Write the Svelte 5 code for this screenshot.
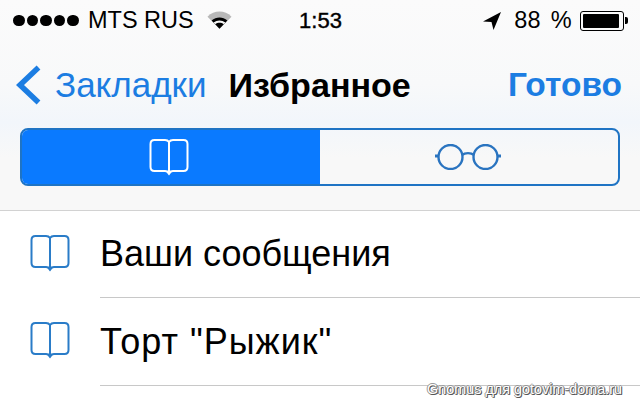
<script>
  const rows = [
    { text: 'Ваши сообщения', wide: false },
    { text: 'Торт "Рыжик"', wide: true }
  ];
</script>

{#snippet book(stroke, width)}
  <svg class="book" viewBox="0 0 40 38" fill="none" stroke={stroke} stroke-width={width}>
    <path d="M20 4 C19 2.500 18 2 16 2 H5.500 C3 2 1.500 3.500 1.500 6 V29 C1.500 31.500 3 33 5.500 33 H16 C18 33 19 33.500 20 35 C21 33.500 22 33 24 33 H34.500 C37 33 38.500 31.500 38.500 29 V6 C38.500 3.500 37 2 34.500 2 H24 C22 2 21 2.500 20 4 Z" />
    <path d="M20 3 V36" />
    <path d="M17 33.500 H23 L20 37.500 Z" fill={stroke} stroke="none" />
  </svg>
{/snippet}

<div class="screen">
  <header class="top">
    <div class="status">
      <div class="status-left">
        <span class="dots">
          {#each Array(5) as _}<i></i>{/each}
        </span>
        <span class="carrier">MTS RUS</span>
        <svg class="wifi" viewBox="0 0 26 18">
          <path d="M13 18 L0.500 5.500 C7.500 -1.500 18.500 -1.500 25.500 5.500 Z" fill="#b8b8b8" />
          <path d="M13 18 L4.800 9.600 C9.500 5.200 16.500 5.200 21.200 9.600 Z" fill="#000" />
          <path d="M6.900 11.700 C10.500 8.700 15.500 8.700 19.100 11.700 L17.500 13.300 C14.800 11.300 11.200 11.300 8.500 13.300 Z" fill="#f8f8f8" />
        </svg>
      </div>
      <span class="time">1:53</span>
      <div class="status-right">
        <svg class="arrow" viewBox="0 0 18 18">
          <path d="M18 0 L0 9.500 L8.500 10 L10.500 18 Z" fill="#000" />
        </svg>
        <span class="pct">88 %</span>
        <span class="battery"><b></b></span>
        <span class="nub"></span>
      </div>
    </div>

    <nav class="nav">
      <div class="back">
        <svg class="chevron" viewBox="0 0 26 40" fill="none" stroke="#1c7de2" stroke-width="5.500">
          <path d="M22.500 2.500 L4 20 L22.500 37.500" />
        </svg>
        <span>Закладки</span>
      </div>
      <span class="title">Избранное</span>
      <span class="done">Готово</span>
    </nav>

    <div class="segments">
      <div class="seg on">
        {@render book('#fff', 2)}
      </div>
      <div class="seg">
        <svg class="glasses" viewBox="0 0 66 26" fill="none" stroke="#2a74c0" stroke-width="2.400">
          <circle cx="15.500" cy="13" r="12" />
          <circle cx="50.500" cy="13" r="12" />
          <path d="M27 11 C30 8.500 36 8.500 39 11" />
          <path d="M0 12 H4 M62 12 H66" stroke-width="3" />
        </svg>
      </div>
    </div>
  </header>

  <ul class="list">
    {#each rows as row}
      <li>
        <span class="icon">{@render book('#2a7cc8', 2)}</span>
        <span class="label" class:wide={row.wide}>{row.text}</span>
      </li>
    {/each}
  </ul>

  <span class="credit">Gnomus для gotovim-doma.ru</span>
</div>

<style>
  :global(body) {
    margin: 0;
    background: #fff;
  }

  .screen {
    position: relative;
    width: 640px;
    height: 409px;
    overflow: hidden;
    background: #fff;
    font-family: "Liberation Sans", Arial, sans-serif;
    color: #000;
  }

  .top {
    height: 211px;
    box-sizing: border-box;
    background: linear-gradient(180deg, #fbfbfb 0%, #f8f9fa 40%, #f2f6fb 58%, #f8f8f8 75%);
    border-bottom: 1px solid #d2d2d2;
    padding-top: 7px;
  }

  .status {
    display: grid;
    grid-template-columns: 1fr auto 1fr;
    align-items: center;
    height: 26px;
    padding: 0 12px 0 13px;
    font-size: 23.500px;
  }

  .status-left,
  .status-right {
    display: flex;
    align-items: center;
  }

  .status-right {
    justify-content: flex-end;
  }

  .dots {
    display: flex;
    gap: 2px;
    margin-right: 9px;
  }

  .dots i {
    width: 11.600px;
    height: 11.600px;
    border-radius: 50%;
    background: #000;
  }

  .wifi {
    width: 25px;
    height: 18px;
    margin-left: 13px;
    margin-top: -2px;
  }

  .time {
    font-size: 22px;
    -webkit-text-stroke: 0.4px #000;
  }

  .arrow {
    width: 18px;
    height: 18px;
    margin-right: 13px;
  }

  .pct {
    margin-right: 8px;
    word-spacing: 3px;
    letter-spacing: 0.3px;
  }

  .battery {
    box-sizing: border-box;
    width: 44px;
    height: 20px;
    padding: 2px;
    border: 1px solid #000;
    border-radius: 3px;
    display: flex;
  }

  .battery b {
    width: 36px;
    background: #000;
    border-radius: 1px;
  }

  .nub {
    width: 3px;
    height: 7px;
    background: #000;
    border-radius: 0 2px 2px 0;
    margin-left: 1px;
  }

  .nav {
    display: flex;
    align-items: center;
    height: 40px;
    margin-top: 32px;
    padding-left: 16px;
    padding-right: 18px;
    font-size: 35px;
  }

  .back {
    display: flex;
    align-items: center;
    color: #1c7de2;
  }

  .chevron {
    width: 26px;
    height: 40px;
    margin-right: 13px;
  }

  .title {
    margin-left: 22px;
    font-size: 34.100px;
    font-weight: 700;
  }

  .done {
    margin-left: auto;
    font-size: 33.500px;
    font-weight: 700;
    color: #1c7de2;
  }

  .segments {
    display: flex;
    height: 58px;
    margin: 23px 20px 0;
    box-sizing: border-box;
    border: 2px solid #1f74c4;
    border-radius: 8px;
    overflow: hidden;
  }

  .seg {
    flex: 1;
    display: flex;
    align-items: center;
    justify-content: center;
  }

  .seg.on {
    flex: 0 0 298px;
    padding-right: 2px;
    background: #0a7aff;
    margin: -2px 0 -2px -2px;
  }

  .book {
    display: block;
    width: 40px;
    height: 38px;
  }

  .glasses {
    width: 66px;
    height: 26px;
    margin-right: 2px;
  }

  .list {
    list-style: none;
    margin: 0;
    padding: 0;
  }

  li {
    display: flex;
    align-items: center;
    height: 87px;
    padding-left: 30px;
  }

  li:last-child {
    height: 88px;
  }

  .icon {
    width: 40px;
    margin-top: -4px;
    margin-right: 30px;
  }

  .label {
    flex: 1;
    align-self: stretch;
    display: flex;
    align-items: center;
    border-bottom: 1px solid #c8c8c8;
    font-size: 36px;
  }

  .label.wide {
    letter-spacing: 1px;
  }

  .credit {
    position: absolute;
    right: 18px;
    top: 381px;
    font-size: 14.400px;
    color: #fff;
    text-shadow: 1px 1px 0 #555, -1px 0 0 #999, 0 -1px 0 #999, 1px 0 0 #888, 0 1px 0 #888;
  }
</style>
